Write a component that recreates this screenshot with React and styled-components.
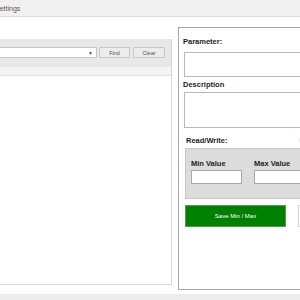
import React from "react";
import styled, { createGlobalStyle } from "styled-components";

const Global = createGlobalStyle`
  html, body { margin: 0; padding: 0; background: #fff; overflow: hidden; }
  body { font-family: "Liberation Sans", Arial, sans-serif; }
`;

const Screen = styled.div`
  width: 300px;
  height: 300px;
  display: flex;
  flex-direction: column;
  overflow: hidden;
  background: #fff;
`;

const MenuBar = styled.div`
  height: 16px;
  flex: none;
  display: flex;
  align-items: center;
  background: #f0f0f0;
  border-bottom: 1px solid #dadada;
  font-size: 7px;
  color: #5a5a5a;
`;

const MenuItem = styled.span`
  margin-left: -5px;
  padding-right: 8px;
`;

const Main = styled.div`
  flex: 1;
  display: flex;
  gap: 6px;
  min-height: 0;
`;

const LeftCol = styled.div`
  width: 172px;
  flex: none;
  padding: 22px 0 9px;
  display: flex;
`;

const ListPanel = styled.div`
  flex: 1;
  display: flex;
  flex-direction: column;
  border-right: 1px solid #d6d6d6;
  border-bottom: 1px solid #d6d6d6;
`;

const SearchBar = styled.div`
  height: 28px;
  flex: none;
  background: #e8e8e8;
  display: flex;
  align-items: flex-start;
  padding-top: 8px;
  box-sizing: border-box;
  gap: 2px;
`;

const Combo = styled.div`
  margin-left: -10px;
  width: 107px;
  height: 11px;
  box-sizing: border-box;
  background: #fff;
  border: 1px solid #c4c4c4;
  display: flex;
  justify-content: flex-end;
  align-items: center;
  padding-right: 3px;
  font-size: 5px;
  color: #444;
`;

const SmallButton = styled.button`
  width: ${(p) => p.w}px;
  height: 11px;
  margin-left: ${(p) => p.ml || 0}px;
  padding: 0;
  box-sizing: border-box;
  background: #ececec;
  border: 1px solid #c8c8c8;
  border-radius: 1px;
  font-family: "Liberation Sans", Arial, sans-serif;
  font-size: 5.5px;
  color: #555;
`;

const HeaderRow = styled.div`
  height: 8px;
  flex: none;
  background: #f4f4f4;
  border-bottom: 1px solid #e2e2e2;
`;

const ListBody = styled.div`
  flex: 1;
  background: #fff;
`;

const DetailPanel = styled.div`
  flex: 1;
  margin: 10px -40px 4px 0;
  border: 1px solid #a6a6a6;
  background: #fff;
  display: flex;
  flex-direction: column;
  padding: 9px 0 0 4px;
`;

const Label = styled.div`
  font-size: 7.5px;
  font-weight: bold;
  line-height: 9px;
  color: #1e1e1e;
`;

const TextBox = styled.div`
  height: ${(p) => p.h}px;
  box-sizing: border-box;
  border: 1px solid #b9b9b9;
  background: #fff;
  margin: ${(p) => p.mt}px 0 0 1px;
`;

const RowLabels = styled.div`
  display: flex;
  margin-top: 8px;
  padding-left: 3px;
`;

const Spacer = styled.div`
  width: 72px;
`;

const FaintLabel = styled.span`
  font-size: 7.5px;
  font-weight: bold;
  line-height: 9px;
  color: #b07a30;
`;

const GroupBox = styled.div`
  height: 51px;
  box-sizing: border-box;
  margin: 3px 0 0 2px;
  background: #dcdcdc;
  border: 1px solid #c6c6c6;
  display: flex;
  padding: 10px 0 0 5px;
  gap: 12px;
`;

const Field = styled.div`
  width: 51px;
  display: flex;
  flex-direction: column;
  gap: 2px;
`;

const ValueInput = styled.div`
  height: 14px;
  width: 51px;
  box-sizing: border-box;
  background: #fff;
  border: 1px solid #a9a9a9;
`;

const Actions = styled.div`
  display: flex;
  gap: 12px;
  margin: 6px 0 0 2px;
`;

const SaveButton = styled.button`
  width: 101px;
  height: 22px;
  background: #008000;
  border: 1px solid #4f9f4f;
  color: #fff;
  font-family: "Liberation Sans", Arial, sans-serif;
  font-size: 6px;
  padding: 0;
`;

const GhostButton = styled.button`
  width: 60px;
  height: 22px;
  background: #fff;
  border: 1px solid #d0d0d0;
`;

const BottomStrip = styled.div`
  height: 6px;
  flex: none;
  background: #ececec;
`;

export default function App() {
  return (
    <Screen>
      <Global />
      <MenuBar>
        <MenuItem>Settings</MenuItem>
      </MenuBar>
      <Main>
        <LeftCol>
          <ListPanel>
            <SearchBar>
              <Combo>▼</Combo>
              <SmallButton w={31}>Find</SmallButton>
              <SmallButton w={32} ml={1}>Clear</SmallButton>
            </SearchBar>
            <HeaderRow />
            <ListBody />
          </ListPanel>
        </LeftCol>
        <DetailPanel>
          <Label>Parameter:</Label>
          <TextBox h={25} mt={6} />
          <Label style={{ marginTop: 3 }}>Description</Label>
          <TextBox h={36} mt={3} />
          <RowLabels>
            <Label>Read/Write:</Label>
            <Spacer />
            <FaintLabel>R</FaintLabel>
          </RowLabels>
          <GroupBox>
            <Field>
              <Label>Min Value</Label>
              <ValueInput />
            </Field>
            <Field>
              <Label>Max Value</Label>
              <ValueInput />
            </Field>
          </GroupBox>
          <Actions>
            <SaveButton>Save Min / Max</SaveButton>
            <GhostButton />
          </Actions>
        </DetailPanel>
      </Main>
      <BottomStrip />
    </Screen>
  );
}
